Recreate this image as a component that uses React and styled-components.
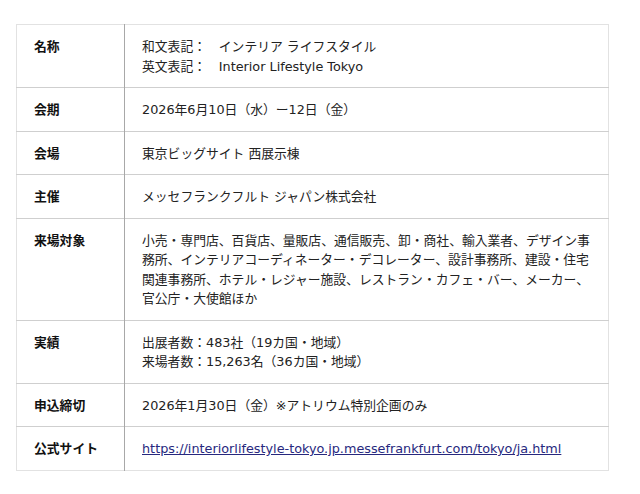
import React from 'react';
import styled, { createGlobalStyle } from 'styled-components';

const GlobalStyle = createGlobalStyle`
  html, body {
    margin: 0;
    padding: 0;
    background: #fff;
  }

  body {
    font-family: "DejaVu Sans", "Noto Sans CJK JP", sans-serif;
    color: #222;
  }
`;

const Page = styled.div`
  padding: 24px 31px 24px 16px;
`;

const Table = styled.table`
  width: 593px;
  border-collapse: collapse;
  border: 1px solid #e2e2e2;
  font-size: 12.8px;
  line-height: 19.5px;
`;

const Row = styled.tr`
  border-bottom: 1px solid #cfcfcf;

  &:last-child {
    border-bottom: 1px solid #e2e2e2;
  }
`;

const Label = styled.th`
  width: 73px;
  padding: 12px 17px 11px 17px;
  text-align: left;
  vertical-align: top;
  font-weight: bold;
  color: #111;
  border-right: 1px solid #a8a8a8;
  white-space: nowrap;
`;

const Value = styled.td`
  padding: 12px 17px 11px 17px;
  vertical-align: top;
  color: #222;
`;

const Line = styled.div``;

const SiteLink = styled.a`
  color: #27287e;
  text-decoration: underline;
`;

const rows = [
  {
    label: '名称',
    lines: ['和文表記：　インテリア ライフスタイル', '英文表記：　Interior Lifestyle Tokyo'],
  },
  { label: '会期', lines: ['2026年6月10日（水）ー12日（金）'] },
  { label: '会場', lines: ['東京ビッグサイト 西展示棟'] },
  { label: '主催', lines: ['メッセフランクフルト ジャパン株式会社'] },
  {
    label: '来場対象',
    text: '小売・専門店、百貨店、量販店、通信販売、卸・商社、輸入業者、デザイン事務所、インテリアコーディネーター・デコレーター、設計事務所、建設・住宅関連事務所、ホテル・レジャー施設、レストラン・カフェ・バー、メーカー、官公庁・大使館ほか',
  },
  {
    label: '実績',
    lines: ['出展者数：483社（19カ国・地域）', '来場者数：15,263名（36カ国・地域）'],
  },
  { label: '申込締切', lines: ['2026年1月30日（金）※アトリウム特別企画のみ'] },
];

const url = 'https://interiorlifestyle-tokyo.jp.messefrankfurt.com/tokyo/ja.html';

export default function App() {
  return (
    <>
      <GlobalStyle />
      <Page>
        <Table>
          <tbody>
            {rows.map((row) => (
              <Row key={row.label}>
                <Label>{row.label}</Label>
                <Value>
                  {row.text
                    ? row.text
                    : row.lines.map((line, i) => <Line key={i}>{line}</Line>)}
                </Value>
              </Row>
            ))}
            <Row>
              <Label>公式サイト</Label>
              <Value>
                <SiteLink href={url}>{url}</SiteLink>
              </Value>
            </Row>
          </tbody>
        </Table>
      </Page>
    </>
  );
}
